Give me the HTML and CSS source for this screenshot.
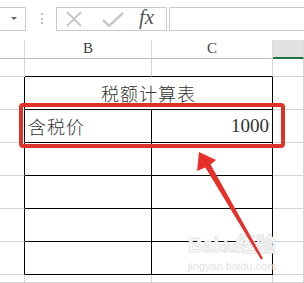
FILE: index.html
```html
<!DOCTYPE html>
<html lang="zh-CN">
<head>
    <meta charset="UTF-8">
    <meta name="viewport" content="width=device-width, initial-scale=1.0">
    <title>税额计算表</title>
    <link rel="stylesheet" href="styles.css">
</head>
<body>
    <div class="toolbar">
        <div class="name-box"><span class="caret"></span></div>
        <div class="grip"></div>
        <div class="fn-box">
            <svg class="tool-icon" width="18" height="16" viewBox="0 0 18 16">
                <path d="M2 1 L16 15 M16 1 L2 15" stroke="#c8c8c8" stroke-width="2" fill="none"/>
            </svg>
            <svg class="tool-icon" width="22" height="16" viewBox="0 0 22 16">
                <path d="M1 9 L7 15 L21 2" stroke="#c8c8c8" stroke-width="2.5" fill="none"/>
            </svg>
            <span class="fx">fx</span>
        </div>
        <div class="formula-box"></div>
    </div>

    <div class="sheet">
        <!-- column headers -->
        <div class="cell head"></div>
        <div class="cell head">B</div>
        <div class="cell head">C</div>
        <div class="cell head selected"></div>

        <!-- partial row above the table -->
        <div class="cell"></div>
        <div class="cell top-edge"></div>
        <div class="cell top-edge"></div>
        <div class="cell"></div>

        <!-- table -->
        <div class="cell left-edge"></div>
        <div class="cell tb title">税额计算表</div>
        <div class="cell"></div>

        <div class="cell left-edge"></div>
        <div class="cell tb label">含税价</div>
        <div class="cell tb num">1000</div>
        <div class="cell"></div>

        <div class="cell left-edge"></div>
        <div class="cell tb"></div>
        <div class="cell tb"></div>
        <div class="cell"></div>

        <div class="cell left-edge"></div>
        <div class="cell tb"></div>
        <div class="cell tb"></div>
        <div class="cell"></div>

        <div class="cell left-edge"></div>
        <div class="cell tb"></div>
        <div class="cell tb"></div>
        <div class="cell"></div>

        <div class="cell left-edge"></div>
        <div class="cell tb"></div>
        <div class="cell tb"></div>
        <div class="cell"></div>

        <!-- partial row below -->
        <div class="cell"></div>
        <div class="cell"></div>
        <div class="cell"></div>
        <div class="cell"></div>

        <!-- annotation overlay -->
        <div class="highlight"></div>
        <div class="watermark">
            <div class="wm-logo">Bai<span class="wm-du">du</span>经验</div>
            <div class="wm-url">jingyan.baidu.com</div>
        </div>
        <svg class="arrow" width="304" height="243" viewBox="0 40 304 243">
            <polygon points="199,152 216,160 210.6,164.5 263,258.5 261,259.5 205.4,167.5 197,171" fill="#e8302a"/>
        </svg>
    </div>
</body>
</html>
```

FILE: styles.css
```css
body {
    margin: 0;
    width: 304px;
    height: 283px;
    overflow: hidden;
    background: #fff;
    font-family: "Liberation Serif", "Noto Sans CJK SC", serif;
}
.toolbar {
    display: flex;
    align-items: center;
    height: 40px;
    box-sizing: border-box;
}
.name-box,
.fn-box,
.formula-box {
    height: 24px;
    box-sizing: border-box;
    border: 1px solid #c9c9c9;
    margin-top: -3px;
}
.name-box {
    width: 26px;
    border-left: none;
    display: flex;
    align-items: center;
    justify-content: flex-end;
    padding-right: 8px;
}
.caret {
    width: 0;
    height: 0;
    border-left: 3px solid transparent;
    border-right: 3px solid transparent;
    border-top: 3px solid #666;
}
.grip {
    width: 0;
    height: 11px;
    border-left: 2px dotted #bcbcbc;
    margin: -3px 0 0 15px;
}
.fn-box {
    width: 111px;
    margin-left: 13px;
    display: flex;
    align-items: center;
    padding-left: 8px;
}
.tool-icon {
    display: block;
}
.tool-icon + .tool-icon {
    margin-left: 19px;
}
.fx {
    margin-left: 15px;
    font-family: "Liberation Serif", serif;
    font-style: italic;
    font-size: 21px;
    color: #555;
    line-height: 1;
    margin-top: -3px;
}
.formula-box {
    flex: 1;
    margin-left: 2px;
    margin-right: -2px;
}

.sheet {
    position: relative;
    display: grid;
    grid-template-columns: 25px 127px 121px 1fr;
    grid-template-rows: 19px 18px repeat(6, 33px) 1fr;
    height: 243px;
}
.cell {
    box-sizing: border-box;
    border-right: 1px solid #d4d4d4;
    border-bottom: 1px solid #d4d4d4;
    font-size: 18px;
    color: #222;
    display: flex;
    align-items: center;
    overflow: hidden;
}
.head {
    justify-content: center;
    align-items: flex-end;
    padding-bottom: 1px;
    font-family: "Liberation Serif", serif;
    font-size: 15px;
    color: #444;
    border-bottom-color: #bdbdbd;
    border-right-color: #dadada;
}
.head.selected {
    background: #e1e1e1;
    border-bottom: 2px solid #217346;
}
.top-edge {
    border-bottom-color: #000;
}
.left-edge {
    border-right-color: #000;
}
.tb {
    border-right-color: #000;
    border-bottom-color: #000;
}
.title {
    grid-column: 2 / 4;
    justify-content: center;
    font-family: "Noto Sans CJK SC", sans-serif;
    font-weight: 300;
    letter-spacing: 1px;
    color: #333;
}
.label {
    padding-left: 3px;
    font-family: "Noto Sans CJK SC", sans-serif;
    font-weight: 300;
    letter-spacing: 1px;
    color: #333;
}
.num {
    justify-content: flex-end;
    padding-right: 3px;
    font-size: 19px;
    color: #333;
}

.highlight {
    position: absolute;
    left: 19px;
    top: 63px;
    width: 266px;
    height: 45px;
    box-sizing: border-box;
    border: 4px solid #dd3229;
    border-radius: 4px;
}
.arrow {
    position: absolute;
    left: 0;
    top: 0;
}
.watermark {
    position: absolute;
    left: 186px;
    top: 195px;
    width: 92px;
    color: #fff;
    -webkit-text-stroke: 1px #e4e4e4;
    font-family: "Liberation Sans", "Noto Sans CJK SC", sans-serif;
    text-align: center;
    line-height: 1;
}
.wm-logo {
    font-size: 20px;
    font-weight: bold;
    white-space: nowrap;
}
.wm-du {
    font-size: 14px;
}
.wm-url {
    font-size: 11px;
    margin-top: 6px;
    color: #e4e4e4;
    -webkit-text-stroke: 0;
}
```
